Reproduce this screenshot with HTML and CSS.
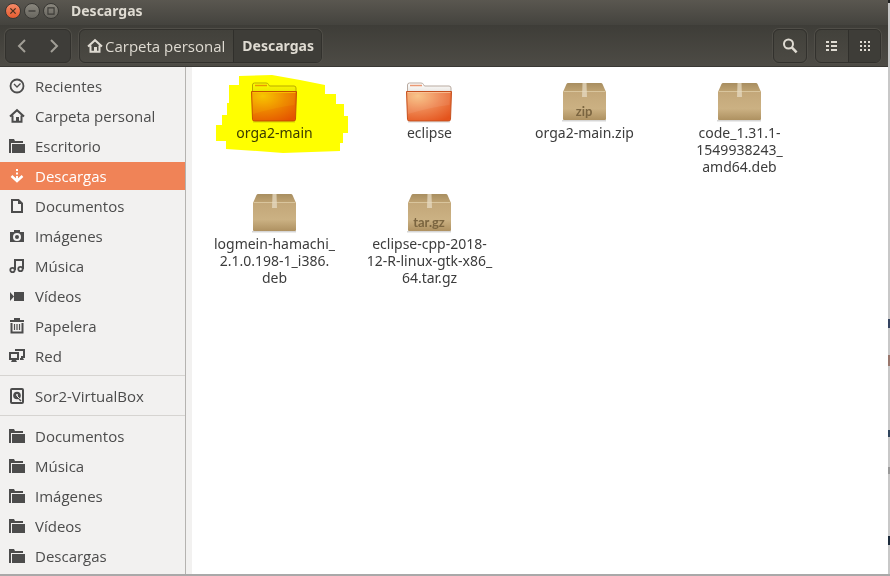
FILE: index.html
```html
<!DOCTYPE html>
<html lang="es">
<head>
<meta charset="utf-8">
<title>Descargas</title>
<link rel="stylesheet" href="styles.css">
</head>
<body>
<svg class="defs" width="0" height="0" aria-hidden="true">
  <defs>
    <linearGradient id="tabGrad" x1="0" y1="0" x2="0" y2="1"><stop offset="0" stop-color="#fff"/><stop offset="1" stop-color="#e6e3de"/></linearGradient>
    <radialGradient id="folderGrad" cx=".25" cy=".15" r="1"><stop offset="0" stop-color="#f8c080"/><stop offset=".5" stop-color="#ee8550"/><stop offset="1" stop-color="#e4531c"/></radialGradient>
    <linearGradient id="lidGrad" x1="0" y1="0" x2="0" y2="1"><stop offset="0" stop-color="#a88e60"/><stop offset="1" stop-color="#c0a474"/></linearGradient>
    <linearGradient id="boxGrad" x1="0" y1="0" x2="0" y2="1"><stop offset="0" stop-color="#c3a779"/><stop offset=".6" stop-color="#cbb183"/><stop offset="1" stop-color="#ae9161"/></linearGradient>
    <symbol id="home" viewBox="0 0 16 16"><path d="M1 8.500 8 2.200l7 6.300M3.500 7.500v6.300h9V7.500" fill="none" stroke="currentColor" stroke-width="2"/><path d="M7 9h3v5H7z" fill="currentColor"/></symbol>
    <symbol id="folder-s" viewBox="0 0 16 16"><path d="M0 1h5l1 2h8v2H2v10H0z" fill="currentColor"/><path d="M3 6h13v9H3z" fill="currentColor"/></symbol>
    <symbol id="folder" viewBox="0 0 48 48">
      <path d="M1.500 9q0-2 2-2H15q2 0 2.500 1.500l1 1.500H43q2 0 2 2v5h-43.500z" fill="url(#tabGrad)" stroke="#b9aaa0"/>
      <path d="M4 9.500h12" stroke="#eb9873" stroke-width="1.500"/>
      <path d="M.500 15.500h45l-1 28q0 1.500-2 1.500h-39q-2 0-2-1.500z" fill="url(#folderGrad)" stroke="#c6511f"/>
      <path d="M1.500 16.500h43" stroke="#fbc9a0" opacity=".8"/>
      <path d="M2 17h42l-.5 12Q26 31 2 38z" fill="#fff" opacity=".08"/>
      <path d="M2 46h42" stroke="#888" opacity=".35"/>
    </symbol>
    <symbol id="box" viewBox="1 0 48 48">
      <path d="M2 44h44v1.500H2z" fill="#777" opacity=".3"/>
      <path d="M8 7h33q1 0 1.500 1L46 16H3L6.500 8Q7 7 8 7z" fill="url(#lidGrad)"/>
      <path d="M3 15.500h43V43q0 1-1 1H4q-1 0-1-1z" fill="url(#boxGrad)"/>
      <path d="M3.500 15.500h42" stroke="#d9c59d"/>
      <path d="M22.500 7h4l.500 14h-5z" fill="#e5dac1" opacity=".75"/>
    </symbol>
  </defs>
</svg>
<div class="window">
  <header class="header">
    <div class="titlebar">
      <button class="wm close" aria-label="Cerrar"><svg viewBox="0 0 16 16"><path d="m5 5 6 6m0-6-6 6" stroke="#47301f" stroke-width="1.500"/></svg></button>
      <button class="wm" aria-label="Minimizar"><svg viewBox="0 0 16 16"><path d="M4 8h8" stroke="#3c3b37" stroke-width="1.500"/></svg></button>
      <button class="wm" aria-label="Maximizar"><svg viewBox="0 0 16 16"><path d="M4.500 4.500h7v7h-7z" fill="none" stroke="#3c3b37" stroke-width="1.300"/></svg></button>
      <h1 class="title">Descargas</h1>
    </div>
    <div class="toolbar">
      <div class="group nav">
        <button aria-label="Atrás"><svg viewBox="0 0 16 16"><path d="m11 2-6 6 6 6" fill="none" stroke="currentColor" stroke-width="2"/></svg></button>
        <button aria-label="Adelante"><svg viewBox="0 0 16 16"><path d="m5 2 6 6-6 6" fill="none" stroke="currentColor" stroke-width="2"/></svg></button>
      </div>
      <nav class="group path" aria-label="Ruta">
        <button><svg viewBox="0 0 16 16"><use href="#home"/></svg>Carpeta personal</button>
        <button class="current">Descargas</button>
      </nav>
      <div class="group search"><button aria-label="Buscar"><svg viewBox="0 0 16 16"><circle cx="6.500" cy="6" r="4.500" fill="none" stroke="currentColor" stroke-width="2"/><path d="m9.800 9.300 4.800 5" stroke="currentColor" stroke-width="2.500"/></svg></button></div>
      <div class="group views">
        <button aria-label="Vista de lista"><svg viewBox="0 0 16 16"><path d="M2 4h3m2 0h6M2 8h3m2 0h6M2 12h3m2 0h6" stroke="currentColor" stroke-width="2"/></svg></button>
        <button class="current" aria-label="Vista de iconos"><svg viewBox="0 0 16 16"><path d="M3 4h10M3 8h10M3 12h10" stroke="currentColor" stroke-width="2" stroke-dasharray="2"/></svg></button>
      </div>
    </div>
  </header>
  <div class="content">
    <nav class="sidebar" aria-label="Lugares">
      <div class="places">
        <a href="#"><svg viewBox="0 0 16 16"><circle cx="8" cy="8" r="6.500" fill="none" stroke="currentColor" stroke-width="1.800"/><path d="m5 6 3 3 3.500-3.500" fill="none" stroke="currentColor" stroke-width="1.300"/></svg>Recientes</a>
        <a href="#"><svg viewBox="0 0 16 16"><use href="#home"/></svg>Carpeta personal</a>
        <a href="#"><svg viewBox="0 0 16 16"><use href="#folder-s"/></svg>Escritorio</a>
        <a href="#" class="selected"><svg viewBox="0 0 16 16"><path d="M8 1v2m0 1.500v2M8 8v4" stroke="currentColor" stroke-width="2"/><path d="m2.500 8 5.500 5L13.500 8" fill="none" stroke="currentColor" stroke-width="2.500"/></svg>Descargas</a>
        <a href="#"><svg viewBox="0 0 16 16"><path d="M3 2h6.500L13 5.500V14H3z" fill="none" stroke="currentColor" stroke-width="2"/><path d="M9 1v5h5z" fill="currentColor"/></svg>Documentos</a>
        <a href="#"><svg viewBox="0 0 16 16"><path fill-rule="evenodd" d="M1 4h4V2h6v2h4v10H1zm7 1a4 4 0 1 0 0 8 4 4 0 0 0 0-8z" fill="currentColor"/><circle cx="8" cy="9" r="2" fill="currentColor"/></svg>Imágenes</a>
        <a href="#"><svg viewBox="0 0 16 16"><path d="M6 12V2h8v9M6 6" fill="none" stroke="currentColor" stroke-width="2"/><circle cx="3.500" cy="12" r="2.200" fill="none" stroke="currentColor" stroke-width="1.800"/><circle cx="11.500" cy="11" r="2.200" fill="none" stroke="currentColor" stroke-width="1.800"/></svg>Música</a>
        <a href="#"><svg viewBox="0 0 16 16"><path d="M5 4h10v9H5zM1 4l4 4.500L1 13z" fill="currentColor"/></svg>Vídeos</a>
        <a href="#"><svg viewBox="0 0 16 16"><path d="M1 3h14M5 1h6M2.500 5v9.500h11V5" fill="none" stroke="currentColor" stroke-width="2"/><path d="M5.500 6v6M8 6v6m2.500-6v6" stroke="currentColor" stroke-width="1.200"/></svg>Papelera</a>
        <a href="#"><svg viewBox="0 0 16 16"><path d="M1 5h8v6H1zM7 3V2h8v7h-3" fill="none" stroke="currentColor" stroke-width="2"/><path d="M3 12h4l1 2H2zM11 10h3l1 2h-4z" fill="currentColor"/></svg>Red</a>
      </div>
      <div class="places">
        <a href="#"><svg viewBox="0 0 16 16"><rect x="2" y="1" width="12" height="14" rx="1" fill="none" stroke="currentColor" stroke-width="2"/><circle cx="8" cy="7.500" r="3.800" fill="currentColor"/><circle cx="8" cy="7" r="1" fill="#f2f1f0"/><path d="m8 8 4 4" stroke="#f2f1f0"/><path d="m10 11 2 2" stroke="currentColor" stroke-width="1.500"/></svg>Sor2-VirtualBox</a>
      </div>
      <div class="places">
        <a href="#"><svg viewBox="0 0 16 16"><use href="#folder-s"/></svg>Documentos</a>
        <a href="#"><svg viewBox="0 0 16 16"><use href="#folder-s"/></svg>Música</a>
        <a href="#"><svg viewBox="0 0 16 16"><use href="#folder-s"/></svg>Imágenes</a>
        <a href="#"><svg viewBox="0 0 16 16"><use href="#folder-s"/></svg>Vídeos</a>
        <a href="#"><svg viewBox="0 0 16 16"><use href="#folder-s"/></svg>Descargas</a>
      </div>
    </nav>
    <main class="files">
      <button class="file marked"><svg class="icon" viewBox="0 0 48 48"><use href="#folder"/></svg><span>orga2-main</span>
        <svg class="marker" viewBox="0 0 136 84" aria-hidden="true"><path d="M25 4 58 3 86 8l25 5v9h11v10h8v12h4v17h-5v10h-3v8l-57 2-26-2-31-2v-8H2V53h6V43h5V31h2V13h10z" fill="#ff0"/></svg></button>
      <button class="file"><svg class="icon" viewBox="0 0 48 48"><use href="#folder"/></svg><span>eclipse</span></button>
      <button class="file"><svg class="icon" viewBox="0 0 48 48"><use href="#box"/><text x="23" y="40" class="kind">zip</text></svg><span>orga2-main.zip</span></button>
      <button class="file"><svg class="icon" viewBox="0 0 48 48"><use href="#box"/></svg><span>code_1.31.1-<br>1549938243_<br>amd64.deb</span></button>
      <button class="file"><svg class="icon" viewBox="0 0 48 48"><use href="#box"/></svg><span>logmein-hamachi_<br>2.1.0.198-1_i386.<br>deb</span></button>
      <button class="file"><svg class="icon" viewBox="0 0 48 48"><use href="#box"/><text x="23" y="40" class="kind">tar.gz</text></svg><span>eclipse-cpp-2018-<br>12-R-linux-gtk-x86_<br>64.tar.gz</span></button>
    </main>
  </div>
</div>
</body>
</html>
```
FILE: styles.css
```css
* { box-sizing: border-box; }
body {
  margin: 0;
  min-height: 100vh;
  display: flex;
  padding: 0 2px 2px 0;
  font: 15px/18px "Open Sans", "Noto Sans", sans-serif;
  color: #4c4c4c;
  background:
    linear-gradient(#a9a9a9, #a9a9a9) bottom / 100% 2px no-repeat,
    linear-gradient(#222 3px, #c8c8c8 3px 319px, #33425f 319px 328px, #c8c8c8 328px 355px, #99776d 355px 366px, #c8c8c8 366px 430px, #30445c 430px 437px, #c8c8c8 437px 467px, #999 467px 474px, #c8c8c8 474px 536px, #1c2b3b 536px 545px, #c8c8c8 545px);
}
button { margin: 0; padding: 0; border: 0; background: none; font: inherit; color: inherit; }
svg { display: block; }
.defs { position: absolute; }
.window { flex: 1; display: flex; flex-direction: column; background: #fff; }

.header { color: #dfdbd2; border-bottom: 1px solid #393834; }
.titlebar {
  display: flex;
  align-items: center;
  gap: 3px;
  height: 25px;
  padding: 0 5px 3px;
  background: linear-gradient(#5a5750, #44433e);
}
.wm { width: 16px; height: 16px; border: 1px solid #393834; border-radius: 50%; background: linear-gradient(#8a877e, #68665f); }
.wm.close { background: linear-gradient(#f58a67, #e65c30); }
.title { margin: 0 0 0 9px; font: 700 14px/18px "Noto Sans", sans-serif; }
.toolbar {
  display: flex;
  align-items: center;
  height: 41px;
  padding: 0 7px 0 5px;
  background: linear-gradient(#3e3d38, #4d4b45);
}
.group { display: flex; height: 34px; border: 1px solid #32312d; border-radius: 6px; box-shadow: 0 0 0 1px #504e48; overflow: hidden; background: linear-gradient(#42413b, #4b4943); }
.group button { display: flex; align-items: center; justify-content: center; min-width: 32px; }
.group svg { width: 16px; height: 16px; }
.group .current { border-left: 1px solid #302f2b; background: #3e3d38; }
.nav { margin-right: 8px; color: #a19e96; background: #3e3d39; }
.path button { padding: 0 8px 0 7px; gap: 2px; }
.path .current { padding: 0 7px 0 8px; font: 700 14px/18px "Noto Sans", sans-serif; }
.search { margin-left: auto; margin-right: 8px; }

.content { flex: 1; display: flex; }
.sidebar { flex: 0 0 186px; padding-top: 5px; background: #f2f1f0; border-right: 1px solid #b5b3b0; }
.places { display: flex; flex-direction: column; gap: 2px; padding-bottom: 5px; }
.places + .places { border-top: 1px solid #d6d4d1; padding-top: 6px; }
.places:last-child { padding-bottom: 0; }
.places a { display: flex; align-items: center; gap: 10px; height: 28px; padding: 0 0 1px 9px; color: inherit; text-decoration: none; }
.places svg { width: 16px; height: 16px; }
.places .selected { background: #f08357; color: #fff; }
.files {
  flex: 1;
  display: grid;
  grid-template-columns: repeat(auto-fill, 155px);
  align-content: start;
  row-gap: 12px;
  padding: 9px 0 0 5px;
  border-left: 6px solid #f2f1f0;
  color: #3c3c3c;
}
.file { position: relative; display: flex; flex-direction: column; align-items: center; font: 14px/17px "Noto Sans", "Open Sans", sans-serif; }
.icon { width: 48px; height: 48px; }
.kind { font: 700 13px Lato, sans-serif; text-anchor: middle; fill: #7b6540; }
.marker { position: absolute; left: 17px; top: -4px; width: 136px; height: 84px; mix-blend-mode: multiply; }
```
